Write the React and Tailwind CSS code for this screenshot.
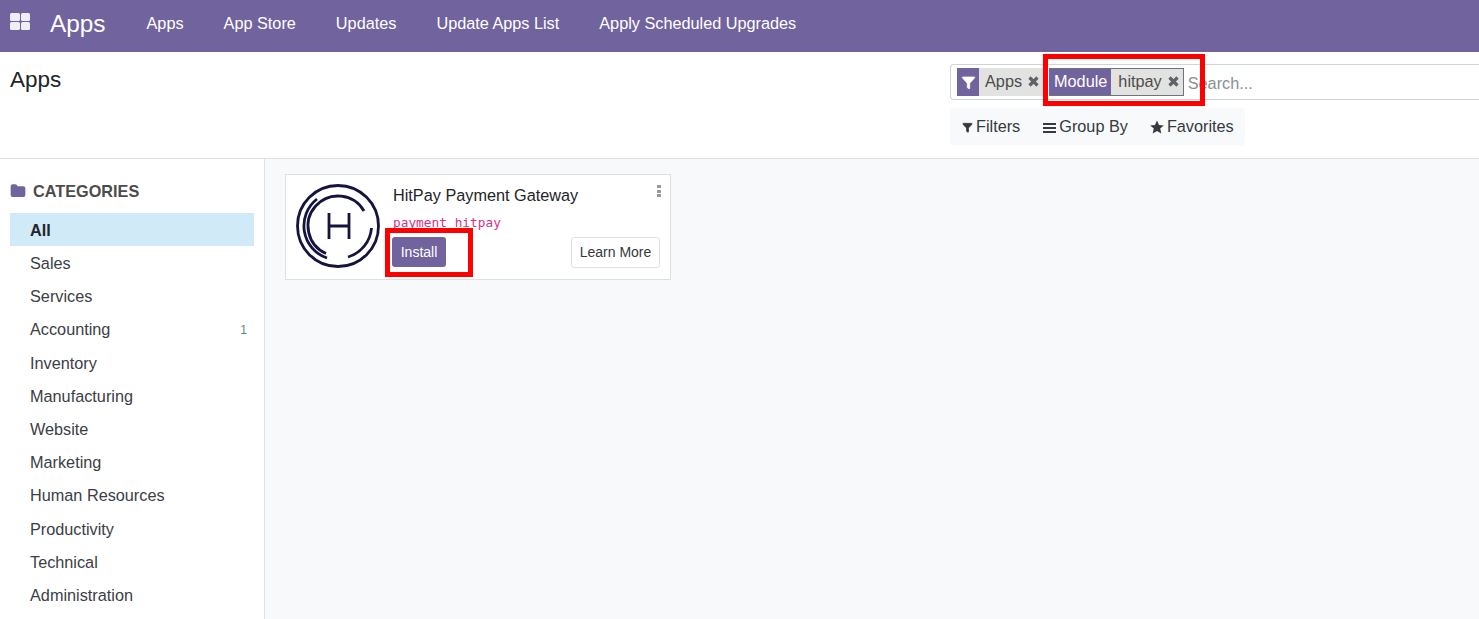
import { Filter, Folder } from "lucide-react";

const NAV = ["Apps", "App Store", "Updates", "Update Apps List", "Apply Scheduled Upgrades"];

const CATEGORIES = [
  { label: "All", active: true },
  { label: "Sales" },
  { label: "Services" },
  { label: "Accounting", count: 1 },
  { label: "Inventory" },
  { label: "Manufacturing" },
  { label: "Website" },
  { label: "Marketing" },
  { label: "Human Resources" },
  { label: "Productivity" },
  { label: "Technical" },
  { label: "Administration" },
];

function CloseX() {
  return (
    <svg width="13" height="13" viewBox="0 0 13 13" className="text-[#5f6368]">
      <path d="M2.5 2.5 L10.5 10.5 M10.5 2.5 L2.5 10.5" stroke="currentColor" strokeWidth="3.2" />
    </svg>
  );
}

function HitPayLogo() {
  return (
    <svg width="84" height="84" viewBox="0 0 84 84" fill="none" stroke="#14143f" strokeWidth="2.8">
      <circle cx="42" cy="42" r="40.5" />
      <path d="M21 15 A34 34 0 0 0 31 74" />
      <path d="M68 27 A30 30 0 1 0 30 69.5" />
      <path d="M75.5 44 A33 33 0 0 1 52 73" />
      <path d="M33 29 V55 M53 29 V55 M33 42 H53" />
    </svg>
  );
}

function Bars() {
  return (
    <svg width="13" height="12" viewBox="0 0 13 12" fill="currentColor" className="mt-[2px]">
      <rect x="0" y="1" width="13" height="2" />
      <rect x="0" y="5" width="13" height="2" />
      <rect x="0" y="9" width="13" height="2" />
    </svg>
  );
}

function StarIcon() {
  return (
    <svg width="14" height="14" viewBox="0 0 14 14" fill="currentColor">
      <polygon points="7,0.5 9,5 13.8,5.4 10.2,8.6 11.3,13.4 7,10.9 2.7,13.4 3.8,8.6 0.2,5.4 5,5" />
    </svg>
  );
}

export default function App() {
  return (
    <div className="h-[619px] overflow-hidden bg-white font-['Liberation_Sans',sans-serif] text-[16.25px] text-[#212529] flex flex-col">
      {/* Top bar */}
      <header className="h-[52px] shrink-0 bg-[#71639e] flex items-center text-white">
        <div className="ml-[10px] grid grid-cols-2 gap-[1px] w-[20px] -mt-[9px]">
          <span className="h-[8px] rounded-[1.5px] bg-[#f0eef5]" />
          <span className="h-[8px] rounded-[1.5px] bg-[#f0eef5]" />
          <span className="h-[8px] rounded-[1.5px] bg-[#f0eef5]" />
          <span className="h-[8px] rounded-[1.5px] bg-[#f0eef5]" />
        </div>
        <span className="ml-[20px] text-[24.375px] leading-none -mt-[4px]">Apps</span>
        <nav className="ml-[41px] flex gap-[40px] -mt-[5px]">
          {NAV.map((item) => (
            <span key={item} className="whitespace-nowrap">{item}</span>
          ))}
        </nav>
      </header>

      {/* Control panel */}
      <div className="h-[107px] shrink-0 border-b border-[#dee2e6] flex justify-between relative">
        <h1 className="ml-[10px] mt-[14px] text-[22.5px] leading-[28px]">Apps</h1>
        <div className="w-[529px] mt-[12px]">
          <div className="h-[36px] border border-[#ced4da] border-r-0 rounded-l-[4px] flex items-center pl-[6px]">
            <div className="flex h-[28px] items-stretch">
              <span className="w-[22px] bg-[#71639e] flex items-center justify-center text-white">
                <Filter size={15} fill="currentColor" strokeWidth={1} />
              </span>
              <span className="bg-[#e2e2e0] flex items-center gap-[5px] pl-[6px] pr-[3px] pb-[2px] text-[#4c4c4c]">
                Apps <CloseX />
              </span>
            </div>
            <div className="ml-[6px] flex h-[28px] items-stretch border border-[#6c757d] border-l-0">
              <span className="bg-[#71639e] text-white flex items-center pl-[5px] pr-[4px] pb-[2px]">Module</span>
              <span className="bg-[#e2e2e0] flex items-center gap-[5px] pl-[7px] pr-[3px] pb-[2px] text-[#4c4c4c]">
                hitpay <CloseX />
              </span>
            </div>
            <span className="ml-[4px] mt-[2px] text-[#8a8f94]">Search...</span>
          </div>
          <div className="mt-[8px] w-[295px] h-[37px] rounded-[4px] bg-[#f8f9fa] flex items-center pl-[12px] text-[#343a40]">
            <span className="flex items-center gap-[3px]">
              <Filter size={11} fill="currentColor" className="mt-[2px]" />
              Filters
            </span>
            <span className="ml-[23px] flex items-center gap-[3px]">
              <Bars />
              Group By
            </span>
            <span className="ml-[22px] flex items-center gap-[3px]">
              <StarIcon />
              Favorites
            </span>
          </div>
        </div>
        {/* Red annotation around the Module facet */}
        <div className="absolute left-[1043px] top-[2px] w-[162px] h-[52px] border-[5px] border-[#ff0000]" />
      </div>

      <div className="flex-1 flex min-h-0">
        {/* Sidebar */}
        <aside className="w-[265px] shrink-0 border-r border-[#dee2e6] pl-[10px] pr-[10px] pt-[22px]">
          <div className="flex items-center gap-[7px] h-[20px] font-bold text-[#4c4c4c]">
            <Folder size={16} fill="#71639e" stroke="#71639e" />
            CATEGORIES
          </div>
          <ul className="mt-[12px]">
            {CATEGORIES.map((c) => (
              <li
                key={c.label}
                className={`h-[33.2px] pt-[1px] flex items-center justify-between pl-[20px] pr-[7px] ${
                  c.active ? "bg-[#d1eaf8] font-bold" : "text-[#3b4046]"
                }`}
              >
                {c.label}
                {c.count && <span className="text-[12px] text-[#5b8a80]">{c.count}</span>}
              </li>
            ))}
          </ul>
        </aside>

        {/* Kanban */}
        <main className="flex-1 bg-[#f8f9fa] pl-[20px] pt-[15px]">
          <div className="relative w-[386px] h-[106px] bg-white border border-[#dcdfe3] flex pl-[10px] pt-[9px]">
            <HitPayLogo />
            <div className="ml-[13px] flex-1 pr-[10px]">
              <div className="flex justify-between">
                <span className="leading-[22px]">HitPay Payment Gateway</span>
                <span className="flex flex-col gap-[1.5px] mt-[1px] -mr-[1px]">
                  <span className="w-[4px] h-[3px] bg-[#999999]" />
                  <span className="w-[4px] h-[3px] bg-[#999999]" />
                  <span className="w-[4px] h-[3px] bg-[#999999]" />
                </span>
              </div>
              <div className="mt-[10px] font-['DejaVu_Sans_Mono',monospace] text-[12.8px] leading-[14px] text-[#d63384]">
                payment_hitpay
              </div>
              <div className="mt-[7px] flex justify-between items-start">
                <button className="h-[30px] w-[54px] -ml-[1px] rounded-[3px] bg-[#71639e] text-white text-[14px]">Install</button>
                <button className="h-[31px] w-[89px] rounded-[3px] bg-white border border-[#dee2e6] text-[14px] text-[#343a40]">
                  Learn More
                </button>
              </div>
            </div>
            {/* Red annotation around Install */}
            <div className="absolute left-[99px] top-[53px] w-[88px] h-[49px] border-[5px] border-[#ff0000]" />
          </div>
        </main>
      </div>
    </div>
  );
}
